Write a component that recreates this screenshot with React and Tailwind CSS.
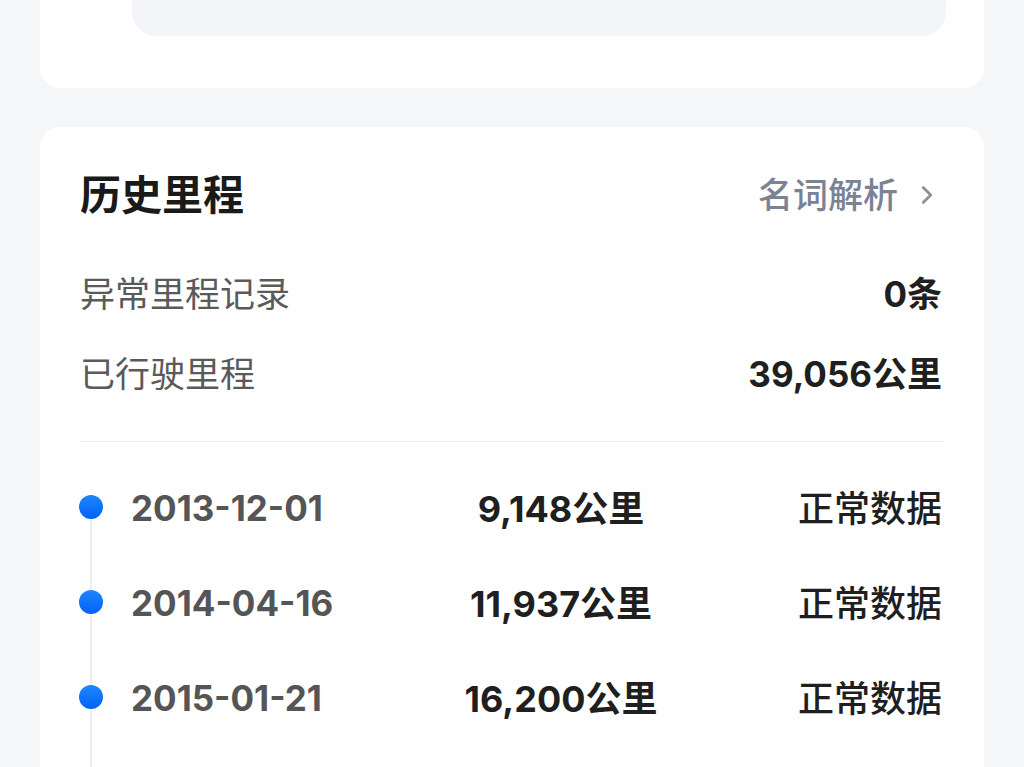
import { ChevronRight } from "lucide-react";

const records = [
  { date: "2013-12-01", km: "9,148公里", status: "正常数据" },
  { date: "2014-04-16", km: "11,937公里", status: "正常数据" },
  { date: "2015-01-21", km: "16,200公里", status: "正常数据" },
];

function TimelineRow({ item, first }) {
  return (
    <div className="flex items-stretch h-[95px]">
      <div className="w-[24px] flex flex-col items-center">
        <div className={`flex-1 w-[2px] ${first ? "bg-transparent" : "bg-[#ededed]"}`} />
        <div className="w-[24px] h-[24px] rounded-full bg-gradient-to-b from-[#1f86ff] to-[#0062f5] shrink-0" />
        <div className="flex-1 w-[2px] bg-[#ededed]" />
      </div>
      <div className="flex flex-1 items-center ml-[28px] pt-[4px]">
        <div className="w-[240px] text-[35px] font-bold text-[#555555] leading-none">
          {item.date}
        </div>
        <div className="w-[380px] text-center text-[36px] font-bold text-[#1f1f1f] leading-none">
          {item.km}
        </div>
        <div className="flex-1 text-right text-[36px] font-medium text-[#1f1f1f] leading-none pr-[2px]">
          {item.status}
        </div>
      </div>
    </div>
  );
}

export default function App() {
  return (
    <div className="min-h-[767px] bg-[#f5f6f8] font-['Inter','Noto_Sans_CJK_SC',sans-serif] overflow-hidden">
      <div className="mx-[40px] h-[88px] bg-white rounded-b-[20px]">
        <div className="ml-[92px] mr-[38px] h-[36px] bg-[#f4f5f8] rounded-b-[24px]" />
      </div>

      <div className="mx-[40px] mt-[39px] bg-white rounded-t-[20px] px-[40px] pt-[43px] pb-[40px]">
        <div className="flex items-center justify-between h-[50px]">
          <h2 className="text-[41px] font-bold text-[#1a1a1a] leading-none">历史里程</h2>
          <div className="flex items-center text-[#7b8294] pr-[2px]">
            <span className="text-[35px] font-medium leading-none">名词解析</span>
            <ChevronRight className="w-[30px] h-[30px] ml-[14px] text-[#8a909c]" strokeWidth={2.2} />
          </div>
        </div>

        <div className="mt-[34px]">
          <div className="flex items-center justify-between h-[80px]">
            <span className="text-[35px] text-[#5a5a5a] leading-none">异常里程记录</span>
            <span className="text-[35px] font-bold text-[#1f1f1f] leading-none pr-[2px]">0条</span>
          </div>
          <div className="flex items-center justify-between h-[80px]">
            <span className="text-[35px] text-[#5a5a5a] leading-none">已行驶里程</span>
            <span className="text-[35px] font-bold text-[#1f1f1f] leading-none pr-[2px]">39,056公里</span>
          </div>
        </div>

        <div className="mt-[27px] h-[1px] bg-[#ececec]" />

        <div className="mt-[17px] ml-[-1px]">
          {records.map((r, i) => (
            <TimelineRow key={r.date} item={r} first={i === 0} />
          ))}
          <div className="flex h-[60px]">
            <div className="w-[24px] flex justify-center">
              <div className="w-[2px] bg-[#ededed]" />
            </div>
          </div>
        </div>
      </div>
    </div>
  );
}
